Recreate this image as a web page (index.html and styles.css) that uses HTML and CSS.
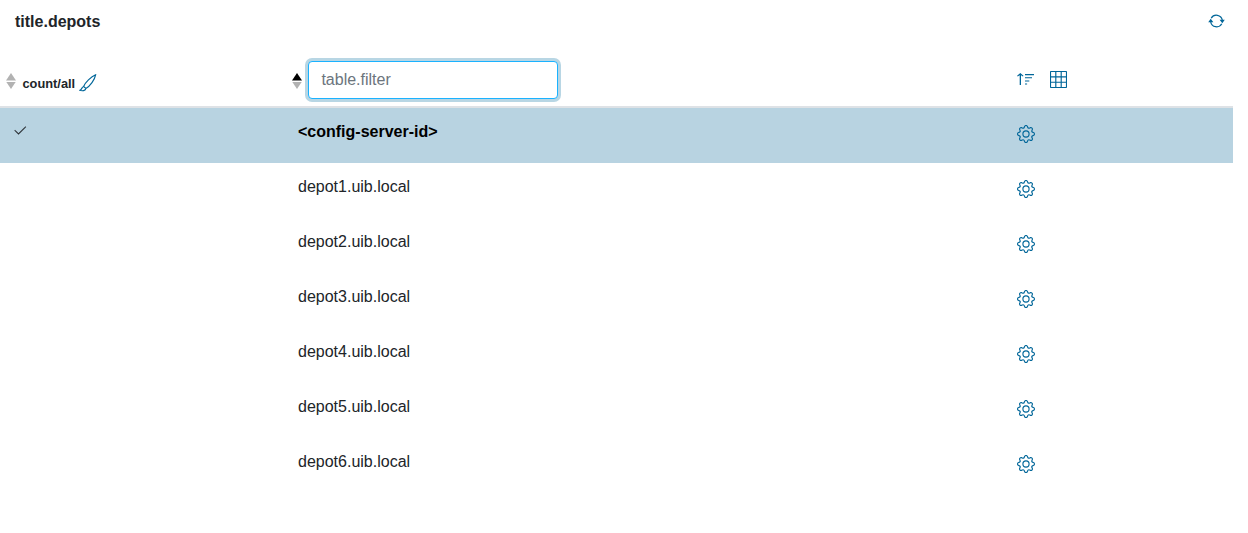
FILE: index.html
```html
<!DOCTYPE html>
<html lang="en">
<head>
<meta charset="utf-8">
<title>Depots</title>
<link rel="stylesheet" href="styles.css">
</head>
<body>
<svg class="defs" aria-hidden="true">
  <symbol id="gear" viewBox="0 0 16 16">
    <path d="M8 4.754a3.246 3.246 0 1 0 0 6.492 3.246 3.246 0 0 0 0-6.492zM5.754 8a2.246 2.246 0 1 1 4.492 0 2.246 2.246 0 0 1-4.492 0z"/>
    <path d="M9.796 1.343c-.527-1.79-3.065-1.79-3.592 0l-.094.319a.873.873 0 0 1-1.255.52l-.292-.16c-1.64-.892-3.433.902-2.54 2.541l.159.292a.873.873 0 0 1-.52 1.255l-.319.094c-1.79.527-1.79 3.065 0 3.592l.319.094a.873.873 0 0 1 .52 1.255l-.16.292c-.892 1.64.901 3.434 2.541 2.54l.292-.159a.873.873 0 0 1 1.255.52l.094.319c.527 1.79 3.065 1.79 3.592 0l.094-.319a.873.873 0 0 1 1.255-.52l.292.16c1.64.893 3.434-.902 2.54-2.541l-.159-.292a.873.873 0 0 1 .52-1.255l.319-.094c1.79-.527 1.79-3.065 0-3.592l-.319-.094a.873.873 0 0 1-.52-1.255l.16-.292c.893-1.64-.902-3.433-2.541-2.54l-.292.159a.873.873 0 0 1-1.255-.52l-.094-.319zm-2.633.283c.246-.835 1.428-.835 1.674 0l.094.319a1.873 1.873 0 0 0 2.693 1.115l.291-.16c.764-.415 1.6.42 1.184 1.185l-.159.292a1.873 1.873 0 0 0 1.116 2.692l.318.094c.835.246.835 1.428 0 1.674l-.319.094a1.873 1.873 0 0 0-1.115 2.693l.16.291c.415.764-.42 1.6-1.185 1.184l-.291-.159a1.873 1.873 0 0 0-2.693 1.116l-.094.318c-.246.835-1.428.835-1.674 0l-.094-.319a1.873 1.873 0 0 0-2.692-1.115l-.292.16c-.764.415-1.6-.42-1.184-1.185l.159-.291A1.873 1.873 0 0 0 1.945 8.93l-.319-.094c-.835-.246-.835-1.428 0-1.674l.319-.094A1.873 1.873 0 0 0 3.06 4.377l-.16-.292c-.415-.764.42-1.6 1.185-1.184l.292.159a1.873 1.873 0 0 0 2.692-1.115l.094-.319z"/>
  </symbol>
</svg>
<main class="panel">
  <header class="titlebar">
    <span class="title">title.depots</span>
    <svg class="icon refresh" viewBox="0 0 17 18"><path class="line" d="M3.2 6.2A6 6 0 0 1 14.3 8.2M13.8 11.8A6 6 0 0 1 2.7 9.8"/><path d="M11.6 7.7h5.2L14.3 11.2zM.2 10.3h5.2L2.7 6.8z"/></svg>
  </header>
  <div class="row head">
    <div class="count">
      <span class="sort"></span>
      <span class="count-label">count/all</span>
      <svg class="icon brush" viewBox="0 0 18 18"><path class="line" d="M16.6.8C12.1 2.6 6 8.8 4.6 12.5L6.9 14.4C11 12.3 15.8 5.6 16.6.8zM4.6 12.5C2.6 13 2.9 15.8.8 16.3 3.2 17.2 6.6 16.8 6.9 14.4"/></svg>
    </div>
    <div class="filter">
      <span class="sort up"></span>
      <input class="field" type="text" placeholder="table.filter">
    </div>
    <div class="tools">
      <svg class="icon" viewBox="0 0 18 18"><path d="M3.7 15V5.2L1.7 6.6 1.1 5.8 4.3 2.9 7.5 5.8 6.9 6.6 5 5.2V15zM9 4.1h9v1.1H9zM9 7.2h7v1.1H9zM9 10.4h4.3v1.1H9zM9 13.5h2.1v1.1H9z"/></svg>
      <svg class="icon table-icon" viewBox="0 0 17 17"><rect class="line" x=".5" y=".5" width="16" height="16" rx=".7"/><path class="line" d="M.5 5.8h16M.5 11.2h16M5.8.5v16M11.2.5v16"/></svg>
    </div>
  </div>
  <div class="row selected">
    <svg class="check" viewBox="0 0 16 16"><path d="M13.854 3.646a.5.5 0 0 1 0 .708l-7 7a.5.5 0 0 1-.708 0l-3.5-3.5a.5.5 0 1 1 .708-.708L6.5 10.293l6.646-6.647a.5.5 0 0 1 .708 0z"/></svg>
    <span class="name">&lt;config-server-id&gt;</span>
    <svg class="icon gear"><use href="#gear"/></svg>
  </div>
  <div class="row"><span></span><span class="name">depot1.uib.local</span><svg class="icon gear"><use href="#gear"/></svg></div>
  <div class="row"><span></span><span class="name">depot2.uib.local</span><svg class="icon gear"><use href="#gear"/></svg></div>
  <div class="row"><span></span><span class="name">depot3.uib.local</span><svg class="icon gear"><use href="#gear"/></svg></div>
  <div class="row"><span></span><span class="name">depot4.uib.local</span><svg class="icon gear"><use href="#gear"/></svg></div>
  <div class="row"><span></span><span class="name">depot5.uib.local</span><svg class="icon gear"><use href="#gear"/></svg></div>
  <div class="row"><span></span><span class="name">depot6.uib.local</span><svg class="icon gear"><use href="#gear"/></svg></div>
</main>
</body>
</html>
```
FILE: styles.css
```css
* { box-sizing: border-box; }
body {
  margin: 0;
  background: #fff;
  color: #212529;
  font: 16px/24px "Liberation Sans", Arial, sans-serif;
}
.defs { display: none; }
.panel { width: 1233px; }
.icon {
  display: block;
  flex: none;
  width: 18px;
  height: 18px;
  fill: #006699;
}
.line { fill: none; stroke: #006699; stroke-width: 1.15; }
.titlebar {
  display: flex;
  justify-content: space-between;
  align-items: flex-start;
  height: 54px;
  padding: 10px 8px 0 15px;
}
.refresh { width: 17px; margin-top: 2px; }
.title { font-weight: bold; }
.row {
  display: grid;
  grid-template-columns: 286px 719px 1fr;
  align-items: start;
  height: 55px;
}
.head {
  height: 54px;
  border-bottom: 2px solid #dee2e6;
}
.selected { background: #b8d3e1; color: #000; font-weight: bold; }
.name { padding: 12px 0 0 12px; }
.gear { margin: 17px 0 0 12px; }
.check { width: 16px; height: 16px; margin: 15px 0 0 12px; fill: #212529; stroke: #212529; stroke-width: .15; }
.count {
  display: flex;
  align-items: center;
  padding: 16px 0 0 6px;
}
.count-label {
  margin: 5px 3.5px 0 6.5px;
  font-size: 12.8px;
  font-weight: bold;
  line-height: 18px;
}
.brush { margin-top: 3px; }
.sort {
  display: flex;
  flex-direction: column;
  gap: 1px;
  width: 10px;
  margin-top: -1px;
}
.sort::before, .sort::after {
  content: "";
  height: 7.5px;
  background: #b2b2b2;
}
.sort::before { clip-path: polygon(50% 0, 100% 100%, 0 100%); }
.sort::after { clip-path: polygon(0 0, 100% 0, 50% 100%); }
.sort.up::before { background: #000; }
.filter {
  display: flex;
  align-items: center;
  gap: 6px;
  padding: 7px 0 0 6px;
}
.filter .sort { margin-top: 2px; }
.field {
  width: 250px;
  height: 38px;
  padding: 6px 12.4px;
  border: 1px solid #1ab2ff;
  border-radius: 4px;
  box-shadow: 0 0 0 3px #b8d6e4;
  font: inherit;
  background: #fff;
}
.field::placeholder { color: #6c757d; opacity: 1; }
.tools {
  display: flex;
  gap: 16px;
  padding: 16px 0 0 11px;
}
.table-icon { width: 17px; height: 17px; margin-top: 1px; }
```
